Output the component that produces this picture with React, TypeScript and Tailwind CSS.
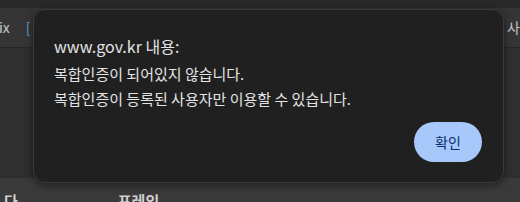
export default function App() {
  const kr = { fontFamily: '"Noto Sans CJK KR", "Noto Sans", sans-serif' };
  return (
    <div className="relative h-[202px] w-[520px] overflow-hidden bg-[#2f2f2f]" style={kr}>
      {/* page behind the dialog */}
      <div className="h-[8px] bg-[#292929]" />
      <div className="flex h-[40px] items-center justify-between border-b border-[#262626] bg-[#353535] text-[14px] text-[#c8c8c8]">
        <div className="flex items-center gap-4">
          <span className="-ml-[1px]">ix</span>
          <span className="text-[#6aa0d8]">[</span>
        </div>
        <span>
          <span className="text-[#d6b24a]">]</span> 사
        </span>
      </div>
      <div className="h-[130px] bg-[#2f2f2f]" />
      <div className="flex h-[24px] items-start bg-[#3a3a3a] pl-[4px] pt-[12px] text-[15px] font-bold text-[#cfcfcf]">
        <span>다</span>
        <span className="ml-[100px]">프레임</span>
      </div>

      {/* alert dialog */}
      <div className="absolute left-[33px] top-[9px] flex h-[174px] w-[471px] flex-col rounded-[12px] border border-[#3a3a3a] bg-[#202020] pl-[20px] pr-[21px] pt-[24px] shadow-[0_2px_8px_rgba(0,0,0,0.5)]">
        <div className="text-[16px] leading-[24px] text-[#e3e3e3]">www.gov.kr 내용:</div>
        <div className="mt-[3px] text-[15px] leading-[25px] text-[#e3e3e3]">
          <div>복합인증이 되어있지 않습니다.</div>
          <div>복합인증이 등록된 사용자만 이용할 수 있습니다.</div>
        </div>
        <div className="mt-auto mb-[20px] flex justify-end">
          <button className="h-[40px] w-[68px] rounded-full bg-[#a8c7fa] text-[14px] text-[#062e6f]">확인</button>
        </div>
      </div>
    </div>
  );
}
